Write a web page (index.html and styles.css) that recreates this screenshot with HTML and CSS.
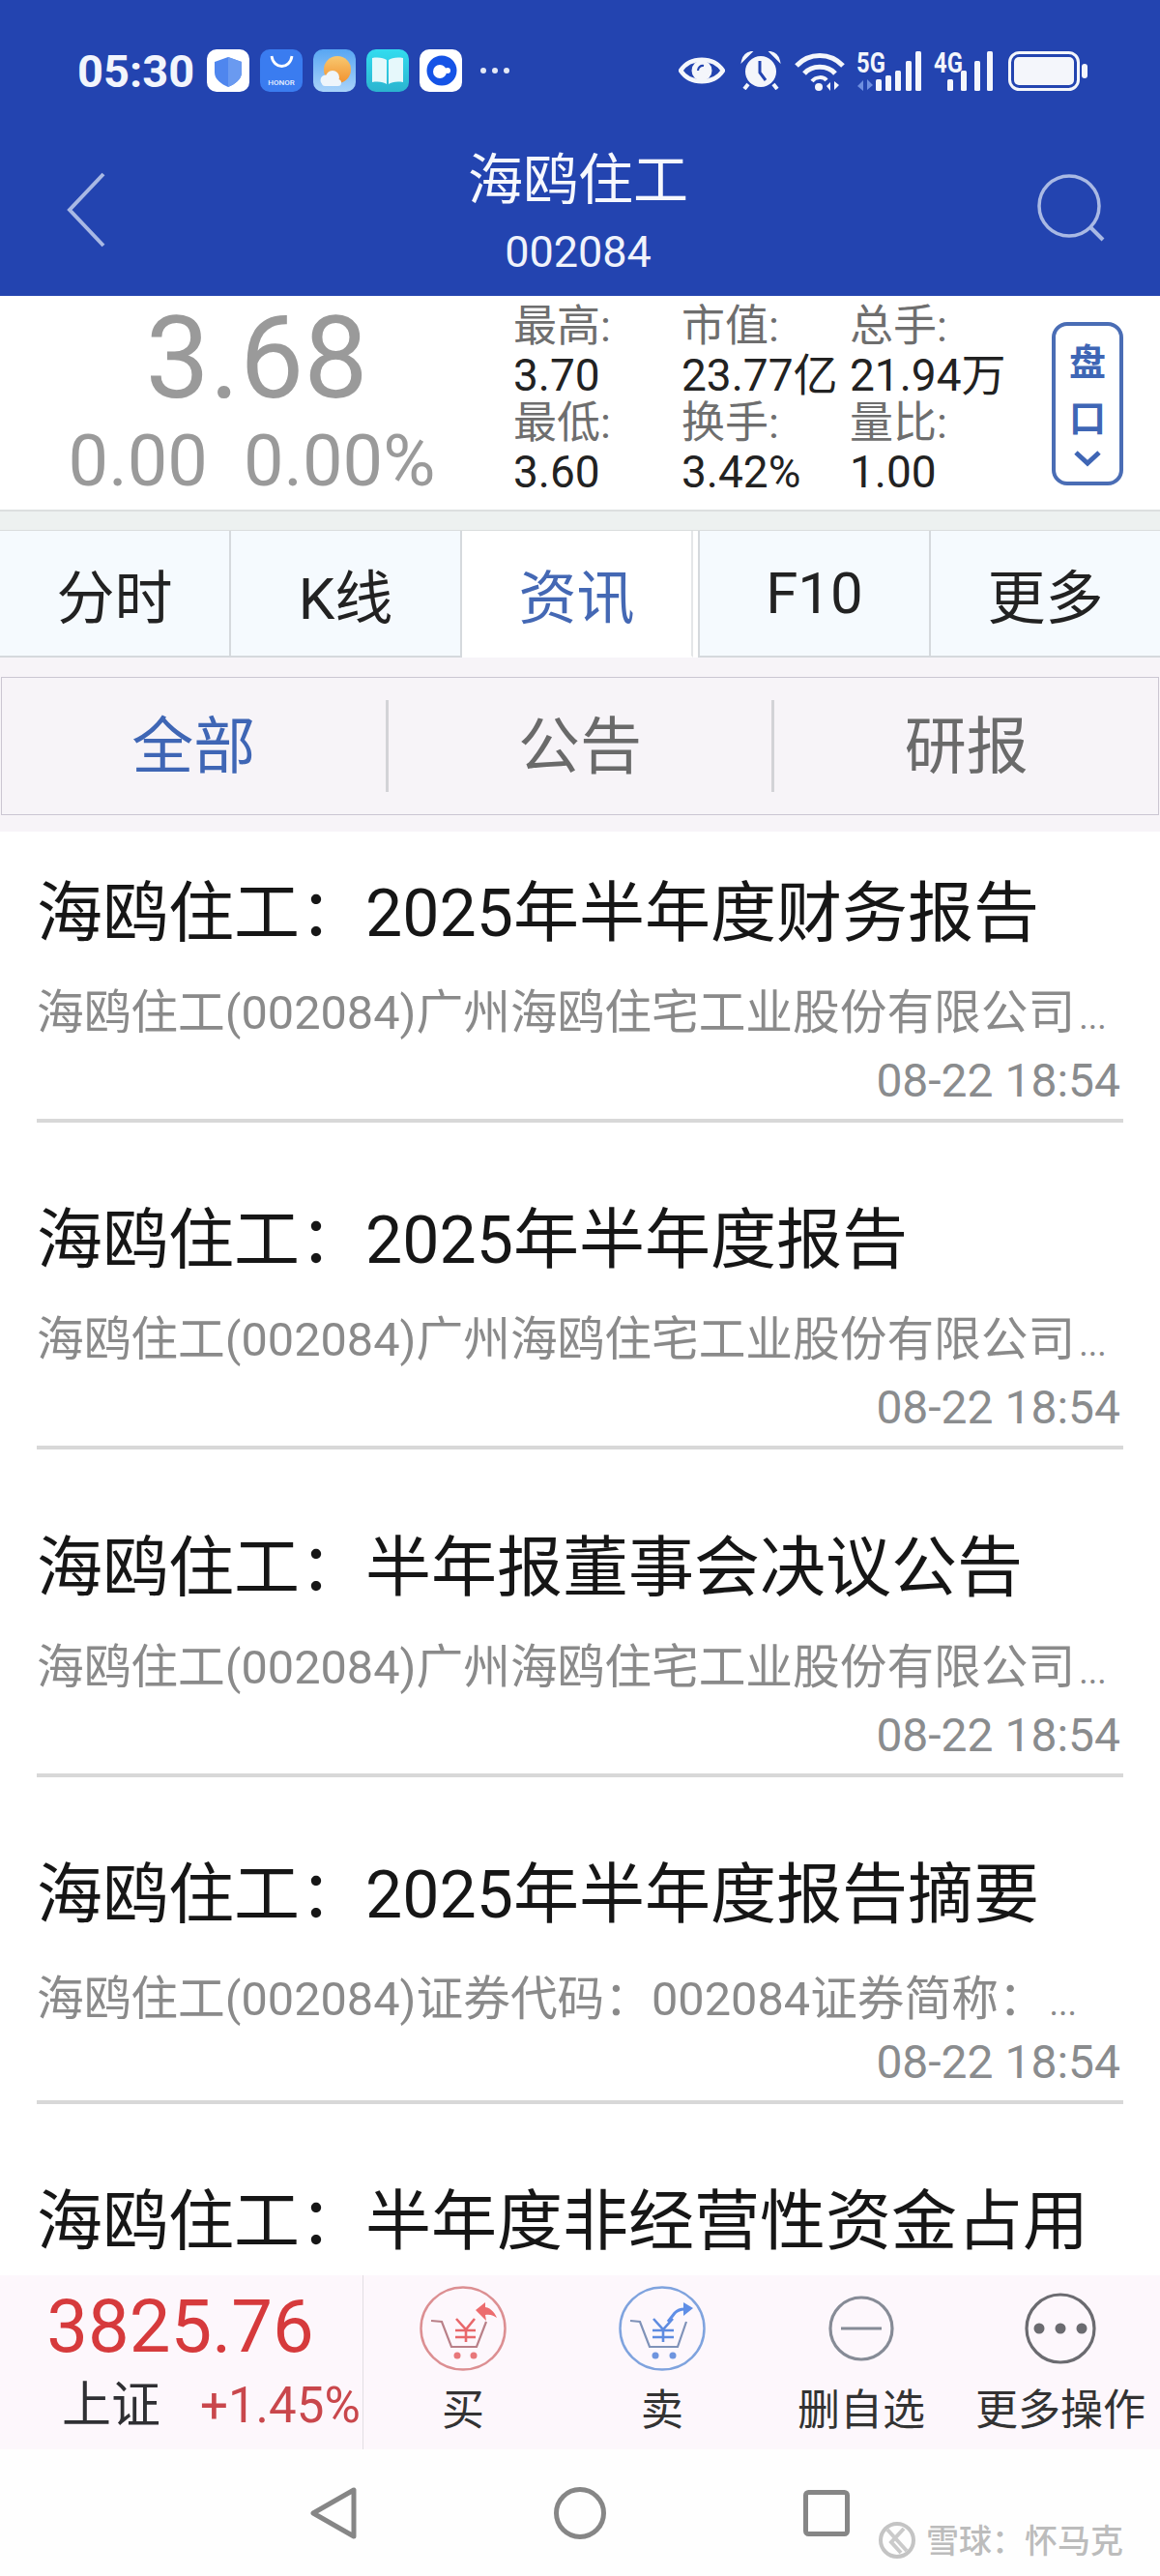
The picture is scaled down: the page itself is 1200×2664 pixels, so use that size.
FILE: index.html
```html
<!DOCTYPE html>
<html lang="zh-CN">
<head>
  <meta charset="UTF-8">
  <title>海鸥住工 002084</title>
  <link rel="stylesheet" href="styles.css">
</head>
<body>
<div class="phone">

  <header class="top">
    <div class="status">
      <span class="clock">05:30</span>
      <div class="apps">
        <svg class="app" viewBox="0 0 44 44"><rect width="44" height="44" rx="10" fill="#fff"/><path d="M22 8 L36 13 V24 C36 31 29 36 22 39 C15 36 8 31 8 24 V13 Z" fill="#4f86ee"/><path d="M22 8 L36 13 V24 C36 31 29 36 22 39 Z" fill="#6a9af0"/></svg>
        <svg class="app" viewBox="0 0 44 44"><rect width="44" height="44" rx="10" fill="#3a7cf0"/><path d="M12 7 C14 21 31 21 33 7" fill="none" stroke="#fff" stroke-width="2.8"/><text x="22" y="37" class="honor">HONOR</text></svg>
        <svg class="app" viewBox="0 0 44 44"><defs><linearGradient id="sky" x1="0" y1="0" x2="0" y2="1"><stop offset="0" stop-color="#58a6f3"/><stop offset="1" stop-color="#a9d3fa"/></linearGradient><linearGradient id="sun" x1="0" y1="0" x2="0" y2="1"><stop offset="0" stop-color="#f8c870"/><stop offset="1" stop-color="#f2922f"/></linearGradient></defs><rect width="44" height="44" rx="10" fill="url(#sky)"/><circle cx="25" cy="21" r="14" fill="url(#sun)"/><circle cx="13" cy="32" r="5.5" fill="#eef5fb"/><circle cx="20" cy="29" r="7" fill="#eef5fb"/><rect x="9" y="31" width="20" height="7" rx="3.5" fill="#eef5fb"/></svg>
        <svg class="app" viewBox="0 0 44 44"><defs><linearGradient id="teal" x1="0" y1="0" x2="0" y2="1"><stop offset="0" stop-color="#33dcef"/><stop offset="1" stop-color="#2bb4cf"/></linearGradient></defs><rect width="44" height="44" rx="10" fill="url(#teal)"/><path d="M6 9 C13 8 18 9 21 11 V36 C18 34 13 33 6 34 Z" fill="#e6f8fb"/><path d="M38 9 C31 8 26 9 23 11 V36 C26 34 31 33 38 34 Z" fill="#e6f8fb"/></svg>
        <svg class="app" viewBox="0 0 44 44"><rect width="44" height="44" rx="10" fill="#fff"/><circle cx="23" cy="22" r="15.5" fill="#1553e6"/><circle cx="21" cy="23" r="7" fill="#fff"/><circle cx="29" cy="22" r="3" fill="#fff"/></svg>
      </div>
      <svg class="more-dots" viewBox="0 0 32 8"><circle cx="4" cy="4" r="3" fill="#e4e9f6"/><circle cx="16" cy="4" r="3" fill="#e4e9f6"/><circle cx="28" cy="4" r="3" fill="#e4e9f6"/></svg>

      <div class="sys">
        <svg class="s-eye" viewBox="0 0 48 36"><path d="M2 18 C12 3 36 3 46 18 C36 33 12 33 2 18 Z" fill="none" stroke="#f4f6fb" stroke-width="4.5"/><circle cx="24" cy="18" r="10.5" fill="#f4f6fb"/><path d="M20 18 A5 5 0 0 1 26 13" fill="none" stroke="#2344b0" stroke-width="2.2"/></svg>
        <svg class="s-alarm" viewBox="0 0 42 40"><circle cx="21" cy="21" r="16" fill="#f4f6fb"/><path d="M2 10 C3 5 6 2 11 1 Z M40 10 C39 5 36 2 31 1 Z" fill="#f4f6fb" stroke="#f4f6fb" stroke-width="2"/><path d="M8 34 L4 39 M34 34 L38 39" stroke="#f4f6fb" stroke-width="4"/><path d="M20 10 V22 L26 30" fill="none" stroke="#2344b0" stroke-width="3"/></svg>
        <svg class="s-wifi" viewBox="0 0 52 41"><path d="M2 15 C15 1 37 1 50 15" fill="none" stroke="#f4f6fb" stroke-width="5"/><path d="M10 23 C18 14 34 14 42 23" fill="none" stroke="#f4f6fb" stroke-width="5"/><path d="M18 31 C22 26 30 26 33 30" fill="none" stroke="#f4f6fb" stroke-width="4"/><circle cx="25" cy="37" r="4" fill="#f4f6fb"/><path d="M37 41 V32 L33 36 Z M41 31 V40 L46 35 Z" fill="#f4f6fb"/></svg>
        <div class="s-signal">
          <span class="net">5G</span>
          <svg class="updown" viewBox="0 0 18 12"><path d="M7 12 V1 L1 7 Z M11 0 V11 L17 6 Z" fill="#6f8fe0"/></svg>
          <svg class="bars" viewBox="0 0 47 41"><rect x="0" y="29" width="6" height="12" rx="1.5" fill="#f4f6fb"/><rect x="10" y="25" width="6" height="16" rx="1.5" fill="#f4f6fb"/><rect x="20" y="20" width="6" height="21" rx="1.5" fill="#f4f6fb"/><rect x="31" y="10" width="6" height="31" rx="1.5" fill="#f4f6fb"/><rect x="41" y="0" width="6" height="41" rx="1.5" fill="#f4f6fb"/></svg>
        </div>
        <div class="s-signal s-signal-4g">
          <span class="net">4G</span>
          <svg class="bars" viewBox="0 0 47 41"><rect x="0" y="29" width="6" height="12" rx="1.5" fill="#f4f6fb"/><rect x="14" y="20" width="6" height="21" rx="1.5" fill="#f4f6fb"/><rect x="28" y="10" width="6" height="31" rx="1.5" fill="#f4f6fb"/><rect x="41" y="0" width="6" height="41" rx="1.5" fill="#f4f6fb"/></svg>
        </div>
        <svg class="s-battery" viewBox="0 0 82 41"><rect x="1.5" y="1.5" width="71" height="38" rx="10" fill="none" stroke="#f4f6fb" stroke-width="3"/><rect x="6" y="6" width="62" height="29" rx="5" fill="#f4f6fb"/><rect x="76" y="13" width="6" height="15" rx="3" fill="#f4f6fb"/></svg>
      </div>
    </div>

    <div class="titlebar">
      <svg class="back" viewBox="0 0 40 78"><path d="M38 2 L3 39 L38 76" fill="none" stroke="#a9b9e4" stroke-width="4"/></svg>
      <div class="title-wrap">
        <div class="name">海鸥住工</div>
        <div class="code">002084</div>
      </div>
      <svg class="search" viewBox="0 0 70 70"><circle cx="33" cy="33" r="31" fill="none" stroke="#a9b9e4" stroke-width="3.5"/><path d="M55 55 L68 68" stroke="#a9b9e4" stroke-width="4"/></svg>
    </div>
  </header>

  <section class="quote">
    <div class="price-box">
      <div class="price">3.68</div>
      <div class="change"><span>0.00</span><span>0.00%</span></div>
    </div>
    <div class="stats">
      <div class="stat-label">最高:</div><div class="stat-label">市值:</div><div class="stat-label">总手:</div>
      <div class="stat-val">3.70</div><div class="stat-val">23.77亿</div><div class="stat-val">21.94万</div>
      <div class="stat-label">最低:</div><div class="stat-label">换手:</div><div class="stat-label">量比:</div>
      <div class="stat-val">3.60</div><div class="stat-val">3.42%</div><div class="stat-val">1.00</div>
    </div>
    <div class="pankou">
      <span>盘</span>
      <span>口</span>
      <svg class="pankou-arrow" viewBox="0 0 30 18"><path d="M3 3 L15 14 L27 3" fill="none" stroke="#3f66b5" stroke-width="5"/></svg>
    </div>
  </section>

  <div class="band"></div>

  <nav class="tabs">
    <div class="tab">分时</div>
    <div class="tab">K线</div>
    <div class="tab active">资讯</div>
    <div class="tab tab-f10">F10</div>
    <div class="tab">更多</div>
  </nav>

  <div class="subbar">
    <div class="subtabs">
      <div class="subtab active">全部</div>
      <div class="subdiv"></div>
      <div class="subtab">公告</div>
      <div class="subdiv"></div>
      <div class="subtab">研报</div>
    </div>
  </div>

  <main class="news">
    <article class="item">
      <h3 class="item-title">海鸥住工<span class="colon">&#xFF1A;</span>2025年半年度财务报告</h3>
      <p class="item-sub">海鸥住工(002084)广州海鸥住宅工业股份有限公司<span class="ell">...</span></p>
      <div class="item-date">08-22 18:54</div>
    </article>
    <article class="item">
      <h3 class="item-title">海鸥住工<span class="colon">&#xFF1A;</span>2025年半年度报告</h3>
      <p class="item-sub">海鸥住工(002084)广州海鸥住宅工业股份有限公司<span class="ell">...</span></p>
      <div class="item-date">08-22 18:54</div>
    </article>
    <article class="item">
      <h3 class="item-title">海鸥住工<span class="colon">&#xFF1A;</span>半年报董事会决议公告</h3>
      <p class="item-sub">海鸥住工(002084)广州海鸥住宅工业股份有限公司<span class="ell">...</span></p>
      <div class="item-date">08-22 18:54</div>
    </article>
    <article class="item">
      <h3 class="item-title">海鸥住工<span class="colon">&#xFF1A;</span>2025年半年度报告摘要</h3>
      <p class="item-sub">海鸥住工(002084)证券代码<span class="colon">&#xFF1A;</span>002084证券简称<span class="colon">&#xFF1A;</span><span class="ell">...</span></p>
      <div class="item-date">08-22 18:54</div>
    </article>
    <article class="item">
      <h3 class="item-title">海鸥住工<span class="colon">&#xFF1A;</span>半年度非经营性资金占用</h3>
    </article>
  </main>

  <footer class="actionbar">
    <div class="index">
      <div class="index-val">3825.76</div>
      <div class="index-row"><span class="index-name">上证</span><span class="index-pct">+1.45%</span></div>
    </div>
    <div class="actions">
      <div class="action">
        <div class="action-icon">
          <svg class="ic-cart" viewBox="0 0 90 88"><ellipse cx="45" cy="44" rx="43.5" ry="42.5" fill="none" stroke="#dc8f92" stroke-width="2.5"/><path d="M12 36 L23 37 L33 63 H59 L69 37" fill="none" stroke="#b98088" stroke-width="2.2"/><path d="M38 34 L48 45 L57 34 M48 45 V58 M37 46 H58 M37 53 H58" fill="none" stroke="#e8676a" stroke-width="2.6"/><circle cx="39" cy="72" r="3.5" fill="#e8777a"/><circle cx="56" cy="72" r="3.5" fill="#e8777a"/><path d="M58 25 L68 17 L68 22 C74 23 78 28 80 33 C76 30 72 29 68 30 L69 36 Z" fill="#ec6c6e"/></svg>
        </div>
        <div class="action-label">买</div>
      </div>
      <div class="action">
        <div class="action-icon">
          <svg class="ic-cart" viewBox="0 0 90 88"><ellipse cx="45" cy="44" rx="43.5" ry="42.5" fill="none" stroke="#7fa3de" stroke-width="2.5"/><path d="M12 36 L22 37 L32 63 H61 L70 37" fill="none" stroke="#7f92b8" stroke-width="2.2"/><path d="M36 34 L46 45 L56 34 M46 45 V58 M35 46 H57 M35 53 H57" fill="none" stroke="#5e8be0" stroke-width="2.6"/><circle cx="38" cy="72" r="3.5" fill="#6f95df"/><circle cx="56" cy="72" r="3.5" fill="#6f95df"/><path d="M51 37 L58 28 C61 25 64 24 68 24" fill="none" stroke="#5f8ee6" stroke-width="3"/><path d="M67 17 L77 23 L67 31 Z" fill="#5f8ee6"/></svg>
        </div>
        <div class="action-label">卖</div>
      </div>
      <div class="action">
        <div class="action-icon">
          <svg class="ic-minus" viewBox="0 0 68 68"><circle cx="34" cy="34" r="32" fill="none" stroke="#868b96" stroke-width="3.2"/><path d="M13 34 H55" stroke="#868b96" stroke-width="3.2"/></svg>
        </div>
        <div class="action-label">删自选</div>
      </div>
      <div class="action">
        <div class="action-icon">
          <svg class="ic-more" viewBox="0 0 74 74"><circle cx="37" cy="37" r="35" fill="none" stroke="#6b6b70" stroke-width="3.2"/><circle cx="15" cy="37" r="5.5" fill="#6b6b70"/><circle cx="37" cy="37" r="5.5" fill="#6b6b70"/><circle cx="59" cy="37" r="5.5" fill="#6b6b70"/></svg>
        </div>
        <div class="action-label">更多操作</div>
      </div>
    </div>
  </footer>

  <div class="navbar">
    <svg class="nav-back" viewBox="0 0 48 54"><path d="M45 3 V51 L3 27 Z" fill="none" stroke="#868686" stroke-width="5" stroke-linejoin="round"/></svg>
    <svg class="nav-home" viewBox="0 0 54 54"><circle cx="27" cy="27" r="24.5" fill="none" stroke="#868686" stroke-width="5"/></svg>
    <svg class="nav-recent" viewBox="0 0 48 48"><rect x="2.5" y="2.5" width="43" height="43" rx="3" fill="none" stroke="#868686" stroke-width="5"/></svg>
  </div>

  <div class="watermark">
    <svg class="wm-logo" viewBox="0 0 40 40"><circle cx="20" cy="20" r="17" fill="none" stroke="#c4c4c4" stroke-width="4"/><path d="M10 9 L30 31 M27 8 L14 22 L24 33" fill="none" stroke="#cacaca" stroke-width="4"/></svg>
    <span>雪球<span class="colon">&#xFF1A;</span>怀马克</span>
  </div>
</div>
</body>
</html>
```

FILE: styles.css
```css
* {
  box-sizing: border-box;
}

html, body {
  margin: 0;
  padding: 0;
}

body {
  font-family: Roboto, "Noto Sans CJK SC", sans-serif;
  background: #fff;
  color: #222;
}

.colon {
  font-family: "Noto Sans CJK TC", sans-serif;
}

.phone {
  position: relative;
  width: 1200px;
  height: 2664px;
  display: flex;
  flex-direction: column;
  overflow: hidden;
}

/* header */
.top {
  background: #2344b0;
  height: 306px;
  color: #fff;
  flex: none;
}

.status {
  height: 146px;
  padding-left: 80px;
  display: flex;
  align-items: center;
}

.clock {
  width: 134px;
  font-size: 47px;
  font-weight: 700;
  color: #f2f5fc;
}

.apps {
  display: flex;
  gap: 11px;
}

.app {
  width: 44px;
  height: 44px;
  display: block;
}

.honor {
  font-family: Roboto, sans-serif;
  font-size: 8px;
  font-weight: 500;
  fill: #e8f0ff;
  text-anchor: middle;
}

.more-dots {
  width: 32px;
  height: 8px;
  margin-left: 18px;
}

.sys {
  display: flex;
  align-items: center;
  margin-left: 174px;
}

.s-eye {
  width: 48px;
  height: 36px;
}

.s-alarm {
  width: 42px;
  height: 40px;
  margin-left: 16px;
}

.s-wifi {
  width: 52px;
  height: 41px;
  margin-left: 14px;
}

.s-signal {
  position: relative;
  width: 67px;
  height: 41px;
  margin-left: 12px;
}

.s-signal-4g {
  width: 61px;
  margin-left: 13px;
}

.net {
  position: absolute;
  left: 0;
  top: -4px;
  font-size: 29px;
  line-height: 32px;
  font-weight: 700;
  color: #f4f6fb;
  transform: scaleX(.82);
  transform-origin: left;
}

.updown {
  position: absolute;
  left: 0;
  bottom: 0;
  width: 18px;
  height: 12px;
}

.bars {
  position: absolute;
  right: 0;
  top: 0;
  width: 47px;
  height: 41px;
}

.s-battery {
  width: 82px;
  height: 41px;
  margin-left: 16px;
}

.titlebar {
  height: 160px;
  padding: 0 63px;
  display: grid;
  grid-template-columns: 1fr auto 1fr;
  align-items: start;
}

.back {
  width: 40px;
  height: 78px;
  margin: 32px 0 0 6px;
}

.title-wrap {
  text-align: center;
  margin-left: -4px;
}

.name {
  font-size: 57px;
  line-height: 70px;
  margin-top: 6px;
  color: #f6f8fd;
}

.code {
  font-size: 45px;
  line-height: 50px;
  margin-top: 14px;
  color: #f0f3fb;
}

.search {
  width: 70px;
  height: 70px;
  margin: 34px -6px 0 0;
  justify-self: end;
}

/* quote */
.quote {
  flex: none;
  height: 223px;
  background: #fff;
  border-bottom: 2px solid #dcdfdf;
  display: flex;
}

.price-box {
  width: 531px;
  text-align: center;
  color: #9a9a9a;
}

.price {
  font-size: 118px;
  line-height: 120px;
  margin-top: 5px;
}

.change {
  font-size: 74px;
  line-height: 70px;
  margin: 11px 10px 0 0;
  display: flex;
  justify-content: center;
  gap: 37px;
}

.stats {
  width: 557px;
  padding-top: 7px;
  display: grid;
  grid-template-columns: 174px 174px 1fr;
  grid-auto-rows: 50px;
}

.stat-label {
  font-size: 45px;
  line-height: 50px;
  color: #6e6e6e;
}

.stat-val {
  font-size: 46px;
  line-height: 50px;
  color: #222;
}

.pankou {
  width: 74px;
  height: 169px;
  margin-top: 27px;
  padding-top: 9px;
  border: 4px solid #4a6db5;
  border-radius: 16px;
  display: flex;
  flex-direction: column;
  align-items: center;
  font-size: 38px;
  font-weight: 700;
  line-height: 58px;
  color: #3f66b5;
}

.pankou-arrow {
  width: 30px;
  height: 18px;
  margin-top: 3px;
}

.band {
  flex: none;
  height: 20px;
  background: #edf1f0;
  border-bottom: 1px solid #dadddd;
}

/* tabs */
.tabs {
  flex: none;
  height: 131px;
  display: flex;
  background: #fff;
}

.tab {
  flex: 1;
  display: flex;
  align-items: center;
  justify-content: center;
  font-size: 60px;
  color: #222;
  background: #f5fafe;
  border-right: 2px solid #d5d9dd;
  border-bottom: 2px solid #d5d9dd;
}

.tab:last-child {
  border-right: 0;
}

.tab.active {
  background: #fff;
  color: #4468b4;
  border-color: #fff;
  border-right-color: #e4e6e8;
}

.tab-f10 {
  margin-left: 5px;
  border-left: 2px solid #d5d9dd;
}

.subbar {
  flex: none;
  height: 180px;
  padding: 20px 1px 17px;
  background: #f7f4f8;
}

.subtabs {
  height: 143px;
  display: flex;
  align-items: center;
  border: 1px solid #cbc6d2;
}

.subtab {
  flex: 1;
  text-align: center;
  font-size: 64px;
  line-height: 80px;
  margin-top: 2px;
  color: #6a6a6a;
}

.subtab.active {
  color: #3f66b5;
}

.subdiv {
  width: 3px;
  height: 95px;
  background: #d3d3d7;
}

/* news list */
.news {
  flex: 1;
  min-height: 0;
  overflow: hidden;
  padding-top: 8px;
  background: #fff;
}

.item {
  margin: 0 38px 45.3px;
  padding-top: 37px;
  border-bottom: 4px solid #d8d8d8;
}

.item:last-child {
  border-bottom: 0;
}

.item-title {
  margin: 0;
  height: 80px;
  font-size: 68px;
  font-weight: 400;
  line-height: 68px;
  color: #161616;
  white-space: nowrap;
}

.item-sub {
  margin: 31px 0 0;
  height: 60px;
  font-size: 48.7px;
  line-height: 64px;
  color: #8a8a8a;
  white-space: nowrap;
}

.ell {
  margin-left: 4px;
  font-size: 36px;
}

.item-date {
  margin: 12px 0 13px;
  padding-right: 3px;
  height: 56px;
  font-size: 48px;
  line-height: 60px;
  text-align: right;
  color: #8a8c8e;
}

/* bottom bar */
.actionbar {
  flex: none;
  height: 180px;
  background: #fdf7fc;
  display: flex;
}

.index {
  width: 376px;
  padding-top: 13px;
  border-right: 1px solid #e3dfe3;
}

.index-val {
  font-size: 76px;
  line-height: 80px;
  text-align: center;
  padding-right: 2px;
  color: #d63a3c;
}

.index-row {
  display: flex;
  align-items: center;
  margin-top: 17px;
  padding-left: 64px;
  line-height: 50px;
}

.index-name {
  font-size: 51px;
  color: #2f2f33;
}

.index-pct {
  margin-left: 41px;
  font-size: 51px;
  color: #c9474c;
}

.actions {
  flex: 1;
  display: flex;
}

.action {
  flex: 1;
  padding-top: 10px;
  display: flex;
  flex-direction: column;
  align-items: center;
}

.action-icon {
  height: 90px;
  display: flex;
  align-items: center;
  justify-content: center;
}

.ic-cart {
  width: 90px;
  height: 88px;
}

.ic-minus {
  width: 68px;
  height: 68px;
}

.ic-more {
  width: 74px;
  height: 74px;
}

.action-label {
  margin-top: 15px;
  font-size: 44px;
  line-height: 50px;
  color: #333;
  white-space: nowrap;
}

/* system nav */
.navbar {
  flex: none;
  height: 131px;
  background: #fefefe;
  display: grid;
  grid-template-columns: repeat(3, 255px);
  justify-content: center;
  align-items: center;
  justify-items: center;
}

.nav-back {
  width: 48px;
  height: 54px;
}

.nav-home {
  width: 54px;
  height: 54px;
}

.nav-recent {
  width: 48px;
  height: 48px;
}

.watermark {
  position: absolute;
  left: 908px;
  top: 2607px;
  display: flex;
  align-items: center;
  gap: 10px;
  font-size: 34px;
  line-height: 38px;
  font-weight: 500;
  color: #bcbcbc;
  text-shadow: 1px 1px 0 #fff;
}

.wm-logo {
  width: 40px;
  height: 40px;
}
```
